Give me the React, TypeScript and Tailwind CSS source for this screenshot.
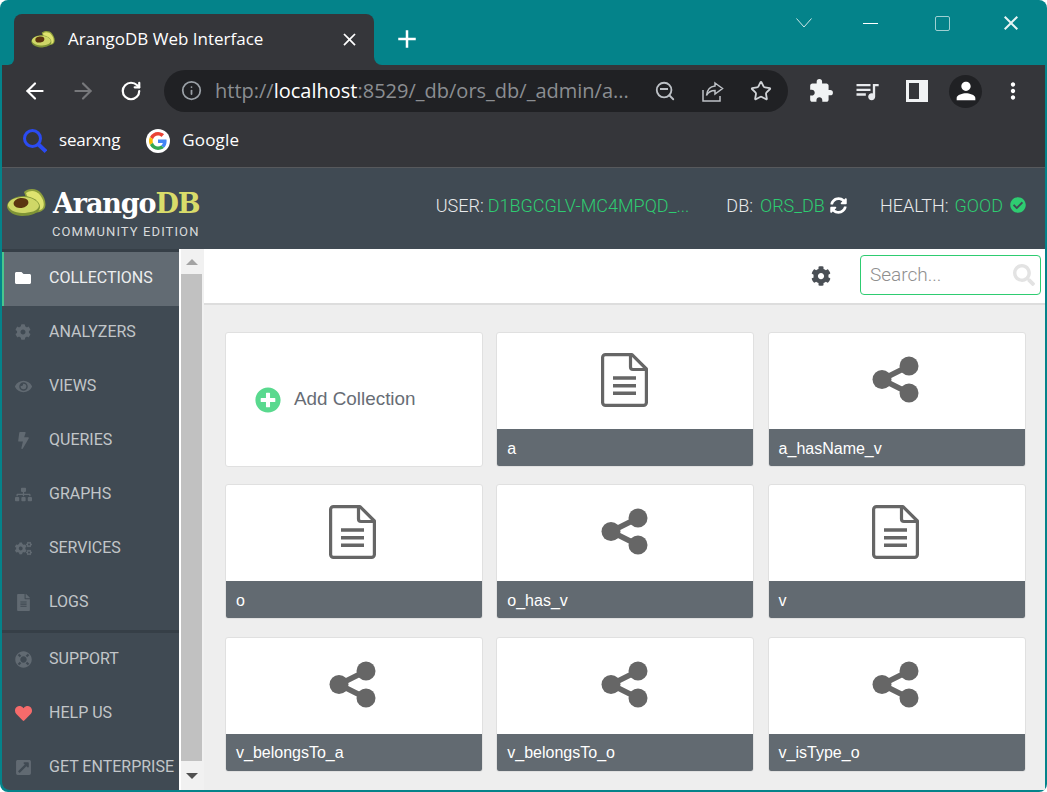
import { ArrowLeft, ArrowRight, Info, RotateCw, Search, Star } from "lucide-react";
import {
  FaBolt,
  FaCheckCircle,
  FaCog,
  FaCogs,
  FaEye,
  FaExternalLinkSquareAlt,
  FaFileAlt,
  FaFolder,
  FaHeart,
  FaLifeRing,
  FaPlusCircle,
  FaSearch,
  FaSitemap,
  FaSyncAlt,
} from "react-icons/fa";
import { MdAdd, MdClose, MdExtension, MdMoreVert, MdPerson, MdQueueMusic } from "react-icons/md";

function Avocado({ className }: { className: string }) {
  return (
    <svg viewBox="0 0 40 28" className={className}>
      <path d="M17 3C21 -1 30 -1 34 4C39 10 40 18 36 21C33 24 28 24 24 22Z" fill="#8fa03c" />
      <path d="M19 4C23 1 29 1 33 6C37 11 38 17 35 20C32 22 28 22 25 21Z" fill="#dfe36f" />
      <path d="M0 16C2 10 10 7 17 7C25 7 33 12 33 18C33 24 24 27 15 27C7 27 -1 22 0 16Z" fill="#7f9436" />
      <path d="M1 15C3 10 10 8 17 8C24 8 32 12 32 17C31 22 23 24 15 24C8 24 0 20 1 15Z" fill="#cfd767" />
      <ellipse cx="14" cy="14" rx="7.500" ry="5" fill="#5b3410" transform="rotate(-8 14 14)" />
    </svg>
  );
}

function GoogleLogo() {
  return (
    <div className="w-6 h-6 rounded-full bg-white flex items-center justify-center">
      <svg viewBox="0 0 48 48" className="w-[18px] h-[18px]">
        <path fill="#EA4335" d="M24 9.5c3.5 0 6.7 1.2 9.2 3.6l6.9-6.9C35.9 2.4 30.5 0 24 0 14.6 0 6.5 5.4 2.6 13.2l8 6.2C12.5 13.7 17.800 9.500 24 9.500z" />
        <path fill="#4285F4" d="M46.900 24.500c0-1.600-.1-3.100-.4-4.500H24v9h12.900c-.6 3-2.200 5.500-4.700 7.200l7.700 6c4.500-4.200 7-10.300 7-17.700z" />
        <path fill="#FBBC05" d="M10.500 28.600A14.500 14.500 0 0 1 10.500 19.400l-8-6.200A24 24 0 0 0 2.600 34.800z" />
        <path fill="#34A853" d="M24 48c6.500 0 11.900-2.100 15.900-5.800l-7.700-6c-2.200 1.500-5 2.300-8.200 2.300-6.200 0-11.500-4.200-13.400-9.900l-8 6.200C6.500 42.600 14.600 48 24 48z" />
      </svg>
    </div>
  );
}

function DocIcon() {
  return (
    <svg viewBox="0 0 47 54" className="w-[47px] h-[54px] mb-[3px]" fill="none" stroke="#666666" strokeWidth="3.200">
      <path d="M4.500 1.600H31L45.400 16V49.500A2.900 2.900 0 0 1 42.500 52.400H4.500A2.900 2.900 0 0 1 1.600 49.500V4.500A2.900 2.900 0 0 1 4.500 1.600Z" strokeLinejoin="round" />
      <path d="M29.500 2V14A2.500 2.500 0 0 0 32 16.500H45" />
      <path d="M12 25H35M12 32.700H35M12 40.300H35" strokeWidth="3.600" />
    </svg>
  );
}

function EdgeIcon() {
  return (
    <svg viewBox="0 0 47 47" className="w-[47px] h-[47px] mb-[3px]" fill="#666666" stroke="#666666">
      <path d="M37 10L10 23.500L37 37" fill="none" strokeWidth="5.500" />
      <circle cx="37" cy="10" r="9.500" stroke="none" />
      <circle cx="37" cy="37" r="9.500" stroke="none" />
      <circle cx="10" cy="23.500" r="9.500" stroke="none" />
    </svg>
  );
}

const mainMenu = [
  { label: "COLLECTIONS", icon: FaFolder, size: "w-[16px] h-[16px]", active: true },
  { label: "ANALYZERS", icon: FaCog, size: "w-[16px] h-[16px]" },
  { label: "VIEWS", icon: FaEye, size: "w-[17px] h-[17px]" },
  { label: "QUERIES", icon: FaBolt, size: "w-[17px] h-[17px]" },
  { label: "GRAPHS", icon: FaSitemap, size: "w-[17px] h-[17px]" },
  { label: "SERVICES", icon: FaCogs, size: "w-[17px] h-[17px]" },
  { label: "LOGS", icon: FaFileAlt, size: "w-[17px] h-[17px]" },
];

const bottomMenu = [
  { label: "SUPPORT", icon: FaLifeRing },
  { label: "HELP US", icon: FaHeart, heart: true },
  { label: "GET ENTERPRISE", icon: FaExternalLinkSquareAlt },
];

const collections = [
  { name: "a", type: "doc", pad: "pr-[2px]" },
  { name: "a_hasName_v", type: "edge", pad: "pr-[2px]" },
  { name: "o", type: "doc", pad: "pr-[4px]" },
  { name: "o_has_v", type: "edge", pad: "pr-[2px]" },
  { name: "v", type: "doc", pad: "pr-[2px]" },
  { name: "v_belongsTo_a", type: "edge", pad: "pr-[4px]" },
  { name: "v_belongsTo_o", type: "edge", pad: "pr-[2px]" },
  { name: "v_isType_o", type: "edge", pad: "pr-[2px]" },
];

export default function App() {
  return (
    <div className="w-[1047px] h-[792px] bg-[#04838a] rounded-lg overflow-hidden flex flex-col px-[2px] pb-[2px] font-['Roboto',sans-serif]">
      {/* Tab strip */}
      <div className="h-[65px] shrink-0 -mx-[2px] flex items-end text-white">
        <div className="w-[6px] h-[8px] ml-[8px] bg-[#35363a] self-end">
          <div className="w-full h-full bg-[#04838a] rounded-br-lg" />
        </div>
        <div className="w-[360px] h-[51px] bg-[#35363a] rounded-t-lg flex items-center pl-[17px] pr-[14px]">
          <Avocado className="w-[25px] h-[17px]" />
          <span className="ml-[12px] mb-[2px] text-[17px] font-['Open_Sans',sans-serif]">ArangoDB Web Interface</span>
          <MdClose className="ml-auto w-[21px] h-[21px]" />
        </div>
        <div className="w-[8px] h-[8px] bg-[#35363a]">
          <div className="w-full h-full bg-[#04838a] rounded-bl-lg" />
        </div>
        <MdAdd className="ml-[10px] mb-[11px] w-[30px] h-[30px]" />
        <div className="ml-auto self-start pt-[11px] flex items-center">
          <svg viewBox="0 0 16 10" className="w-[16px] h-[10px]" fill="none" stroke="#cfe8e8">
            <path d="M0.500 0.500L8 9L15.500 0.500" />
          </svg>
          <div className="ml-[51px] w-[15px] h-px bg-white" />
          <div className="ml-[57px] w-[15px] h-[15px] border border-[#9fd0d2] rounded-[2px]" />
          <MdClose className="ml-[49px] mr-[24px] w-[24px] h-[24px] text-[#e6f4f4]" />
        </div>
      </div>

      {/* Toolbar */}
      <div className="h-[52px] shrink-0 bg-[#35363a] flex items-center text-white">
        <ArrowLeft className="ml-[20px] w-[26px] h-[26px]" strokeWidth={2} />
        <ArrowRight className="ml-[22px] w-[26px] h-[26px] text-[#77787b]" strokeWidth={2} />
        <RotateCw className="ml-[24px] w-[22px] h-[22px]" strokeWidth={2.4} />
        <div className="ml-[22px] w-[624px] h-[42px] bg-[#202124] rounded-full flex items-center pl-[17px] mt-[-1px]">
          <Info className="w-[21px] h-[21px] text-[#9aa0a6]" />
          <div className="ml-[13px] text-[20px] text-[#8b8e92] font-['Open_Sans',sans-serif] whitespace-nowrap">
            http://<span className="text-white">localhost</span>:8529/_db/ors_db/_admin/a...
          </div>
          <div className="ml-[25px] relative w-[22px] h-[22px] text-[#bdc1c6]">
            <Search className="w-[22px] h-[22px]" />
            <div className="absolute left-[6px] top-[8px] w-[8px] h-[2px] bg-[#bdc1c6]" />
          </div>
          <svg viewBox="0 0 24 24" className="ml-[25px] w-[24px] h-[24px]" fill="none" stroke="#bdc1c6" strokeWidth="1.500">
            <path d="M2 11v11h17v-5" />
            <path d="M14 4l7.500 5.500L14 15v-3.500c-4 0-6.500 1-8.500 5 .5-5.500 3.500-9 8.500-9.500z" />
          </svg>
          <Star className="ml-[25px] w-[22px] h-[22px] text-[#d0d3d7]" strokeWidth={2} />
        </div>
        <MdExtension className="ml-[20px] w-[26px] h-[26px] text-[#f1f3f4]" />
        <MdQueueMusic className="ml-[19px] w-[28px] h-[28px] text-[#e8eaed]" />
        <svg viewBox="0 0 22 22" className="ml-[25px] w-[22px] h-[22px]">
          <path fillRule="evenodd" fill="#f1f3f4" d="M0 0h22v22H0zM3 3v16h10V3z" />
        </svg>
        <div className="ml-[21px] w-[33px] h-[33px] rounded-full bg-[#202124] flex items-center justify-center">
          <MdPerson className="w-[28px] h-[28px]" />
        </div>
        <MdMoreVert className="ml-[18px] w-[26px] h-[26px]" />
      </div>

      {/* Bookmarks */}
      <div className="h-[51px] shrink-0 bg-[#35363a] border-b border-[#57595c] flex items-center text-white text-[17px] font-['Open_Sans',sans-serif] pb-[3px]">
        <svg viewBox="0 0 24 24" className="ml-[21px] w-[24px] h-[24px]" fill="none" stroke="#2b4bf2">
          <circle cx="9.500" cy="9.500" r="8" strokeWidth="3" />
          <path d="M15.500 15.500L23 22.500" strokeWidth="4" />
        </svg>
        <span className="ml-[12px] mb-[1px] tracking-[-0.2px]">searxng</span>
        <div className="ml-[26px]">
          <GoogleLogo />
        </div>
        <span className="ml-[12px] mb-[1px] tracking-[0.2px]">Google</span>
      </div>

      {/* ArangoDB header */}
      <div className="h-[81px] shrink-0 bg-[#404a53] flex text-[18px] font-light">
        <div className="pl-[5px] pt-[20px] flex items-start">
          <Avocado className="w-[40px] h-[28px] mt-[1px]" />
          <div className="ml-[5px] flex flex-col items-end">
            <div className="text-[27px] leading-[32px] font-bold font-['DejaVu_Serif',serif] tracking-[-1.100px] text-white">
              Arango<span className="text-[#d9dc6a]">DB</span>
            </div>
            <div className="text-[13px] leading-[15px] mt-[4px] font-normal tracking-[1.100px] text-[#d8dadb] whitespace-nowrap">COMMUNITY EDITION</div>
          </div>
        </div>
        <div className="ml-auto mr-[19px] mt-[25px] h-[24px] flex items-center whitespace-nowrap text-[#e9eaec]">
          <span>USER:</span>
          <span className="ml-[4px] text-[#2ecc71]">D1BGCGLV-MC4MPQD_...</span>
          <span className="ml-[37px]">DB:</span>
          <span className="ml-[7px] text-[#2ecc71]">ORS_DB</span>
          <FaSyncAlt className="ml-[5px] w-[17px] h-[17px] text-white" />
          <span className="ml-[33px]">HEALTH:</span>
          <span className="ml-[6px] text-[#2ecc71]">GOOD</span>
          <FaCheckCircle className="ml-[7px] w-[16px] h-[16px] text-[#2ecc71]" />
        </div>
      </div>

      {/* Page */}
      <div className="flex-1 min-h-0 flex">
        <div className="w-[177px] shrink-0 bg-[#404a53] border-t-[3px] border-[#363f47] rounded-bl-lg overflow-hidden flex flex-col text-[16px] text-[#c2c6c9]">
          <div className="flex flex-col">
            {mainMenu.map((item) => {
              const Icon = item.icon;
              return (
                <div
                  key={item.label}
                  className={
                    item.active
                      ? "h-[54px] flex items-center bg-[#626b73] border-l-2 border-[#48c78e] text-[#eceeef] pl-[11px] pb-[2px]"
                      : "h-[54px] flex items-center pl-[13px] pb-[2px]"
                  }
                >
                  <div className="w-[17px] flex">
                    <Icon className={item.active ? `${item.size} text-white` : `${item.size} text-[#616a72]`} />
                  </div>
                  <span className="ml-[17px]">{item.label}</span>
                </div>
              );
            })}
          </div>
          <div className="h-[3px] shrink-0 bg-[#363f47]" />
          <div className="flex flex-col">
            {bottomMenu.map((item) => {
              const Icon = item.icon;
              return (
                <div key={item.label} className="h-[54px] flex items-center pl-[13px] pb-[2px] whitespace-nowrap">
                  <Icon className={item.heart ? "w-[17px] h-[17px] text-[#f56b6b]" : "w-[17px] h-[17px] text-[#616a72]"} />
                  <span className="ml-[17px]">{item.label}</span>
                </div>
              );
            })}
          </div>
        </div>

        {/* Scrollbar */}
        <div className="w-[25px] shrink-0 border-l-2 border-white bg-[#f1f1f1] flex flex-col items-center pr-[2px]">
          <div className="h-[25px] shrink-0 flex items-center justify-center">
            <div className="w-0 h-0 border-x-[6px] border-x-transparent border-b-[6px] border-b-[#a3a3a3]" />
          </div>
          <div className="w-full h-[487px] bg-[#c1c1c1]" />
          <div className="flex-1 flex items-center justify-center">
            <div className="w-0 h-0 border-x-[6px] border-x-transparent border-t-[6px] border-t-[#505050]" />
          </div>
        </div>

        {/* Content */}
        <div className="flex-1 min-w-0 bg-[#eeeeee] flex flex-col">
          <div className="h-[56px] shrink-0 bg-white border-b-2 border-[#dddddd] flex items-start">
            <FaCog className="ml-auto mt-[17px] w-[20px] h-[20px] text-[#4a4f55]" />
            <div className="ml-[29px] mr-[4px] mt-[6px] w-[181px] h-[40px] border border-[#2ecc71] rounded-[4px] flex items-center pl-[9px] pr-[5px]">
              <span className="text-[19px] font-light text-[#8f8f8f]">Search...</span>
              <FaSearch className="ml-auto w-[22px] h-[22px] text-[#e3e3e3]" />
            </div>
          </div>
          <div className="pl-[21px] pt-[27px] grid grid-cols-[258px_258px_258px] auto-rows-[135px] gap-x-[13.300px] gap-y-[17.300px] font-['Liberation_Sans',sans-serif]">
            <div className="bg-white border border-[#e0e0e0] rounded-[3px] flex items-center pl-[29px]">
              <FaPlusCircle className="w-[26px] h-[26px] text-[#59d98e]" />
              <span className="ml-[13px] text-[18.850px] text-[#676d75]">Add Collection</span>
            </div>
            {collections.map((c) => (
              <div key={c.name} className="bg-white border border-[#e0e0e0] rounded-[3px] overflow-hidden flex flex-col">
                <div className={`flex-1 flex items-center justify-center ${c.pad}`}>
                  {c.type === "doc" ? <DocIcon /> : <EdgeIcon />}
                </div>
                <div className="h-[38px] shrink-0 -mx-px -mb-px bg-[#626a71] text-white text-[16px] flex items-center pl-[11px] pt-[1px]">{c.name}</div>
              </div>
            ))}
          </div>
        </div>
      </div>
    </div>
  );
}
